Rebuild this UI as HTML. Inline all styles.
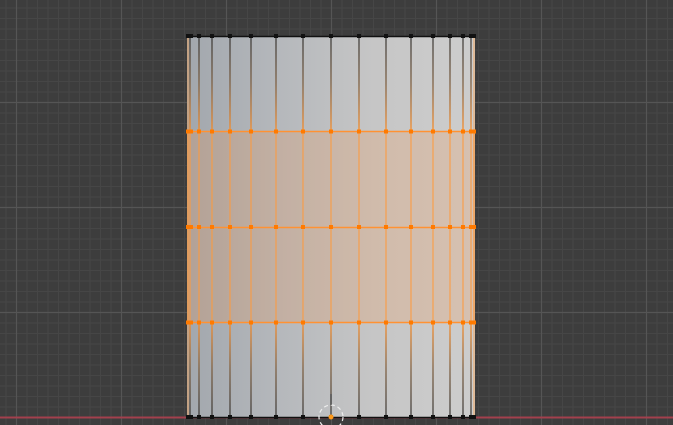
<!DOCTYPE html>
<html><head><style>html,body{margin:0;padding:0;background:#3d3d3d;overflow:hidden}svg{display:block}</style></head><body>
<svg width="673" height="425" viewBox="0 0 673 425" xmlns="http://www.w3.org/2000/svg">
<defs>
<pattern id="minor" width="10.5" height="10.5" patternUnits="userSpaceOnUse" x="5.5" y="7.5">
<path d="M0 0.5H10.5M0.5 0V10.5" stroke="#464646" stroke-width="1" fill="none"/>
</pattern>
<linearGradient id="body" x1="187" x2="475" y1="0" y2="0" gradientUnits="userSpaceOnUse">
<stop offset="0" stop-color="#a2a7ad"/><stop offset="0.3" stop-color="#b4b7bb"/><stop offset="0.65" stop-color="#c6c6c6"/><stop offset="1" stop-color="#cdcdcd"/>
</linearGradient>
<linearGradient id="topl" x1="0" y1="36" x2="0" y2="131" gradientUnits="userSpaceOnUse">
<stop offset="0" stop-color="#333"/><stop offset="0.5" stop-color="#7a5a3a"/><stop offset="1" stop-color="#ff8a1e"/></linearGradient>
<linearGradient id="botl" x1="0" y1="322" x2="0" y2="417" gradientUnits="userSpaceOnUse">
<stop offset="0" stop-color="#ff8a1e"/><stop offset="0.5" stop-color="#7a5a3a"/><stop offset="1" stop-color="#333"/></linearGradient>
<g id="dots">
<rect x="186" y="-2" width="4" height="4"/><rect x="189" y="-2" width="4" height="4"/><rect x="197" y="-2" width="4" height="4"/><rect x="210" y="-2" width="4" height="4"/><rect x="228" y="-2" width="4" height="4"/><rect x="249" y="-2" width="4" height="4"/><rect x="274" y="-2" width="4" height="4"/><rect x="301" y="-2" width="4" height="4"/><rect x="329" y="-2" width="4" height="4"/><rect x="357" y="-2" width="4" height="4"/><rect x="384" y="-2" width="4" height="4"/><rect x="409" y="-2" width="4" height="4"/><rect x="431" y="-2" width="4" height="4"/><rect x="448" y="-2" width="4" height="4"/><rect x="461" y="-2" width="4" height="4"/><rect x="469" y="-2" width="4" height="4"/><rect x="472" y="-2" width="4" height="4"/>
</g>
</defs>
<rect width="673" height="425" fill="#3d3d3d"/>
<rect width="673" height="425" fill="url(#minor)"/>
<g stroke="#555" stroke-width="1.2">
<path d="M16.5 0V425M121.5 0V425M226.5 0V425M331.5 0V425M436.5 0V425M541.5 0V425M646.5 0V425"/>
<path d="M0 102.5H673M0 207.5H673M0 312.5H673"/>
</g>
<line x1="0" y1="417.5" x2="673" y2="417.5" stroke="#a3404d" stroke-width="2"/>
<rect x="187" y="36" width="288" height="381" fill="url(#body)"/>
<rect x="187" y="131" width="288" height="191" fill="#ff8c30" opacity="0.18"/>
<g stroke-width="1.2">
<path stroke="url(#topl)" d="M190 36V131M199 36V131M212 36V131M230 36V131M251 36V131M276 36V131M303 36V131M331 36V131M359 36V131M386 36V131M411 36V131M433 36V131M450 36V131M463 36V131M471 36V131"/>
<path stroke="#ff9a3c" opacity="0.85" d="M188 131V322M190 131V322M199 131V322M212 131V322M230 131V322M251 131V322M276 131V322M303 131V322M331 131V322M359 131V322M386 131V322M411 131V322M433 131V322M450 131V322M463 131V322M471 131V322M474 131V322"/>
<path stroke="url(#botl)" d="M190 322V417M199 322V417M212 322V417M230 322V417M251 322V417M276 322V417M303 322V417M331 322V417M359 322V417M386 322V417M411 322V417M433 322V417M450 322V417M463 322V417M471 322V417"/>
<path stroke="#ff9a3c" opacity="0.6" d="M188 36V417M474 36V417"/>
</g>
<path d="M187 131.5H475M187 227.5H475M187 322.5H475" stroke="#ff9233" stroke-width="1.5"/>
<path d="M187 36.5H475M187 417.5H475" stroke="#111" stroke-width="1.5"/>
<g fill="#ff7a00">
<use href="#dots" y="131.5"/><use href="#dots" y="227"/><use href="#dots" y="322.5"/>
</g>
<g fill="#111"><use href="#dots" y="36"/><use href="#dots" y="417"/></g>
<circle cx="331" cy="417" r="12" fill="none" stroke="#eee" stroke-width="1.2" stroke-dasharray="4 3"/>
<path d="M331 405V394" stroke="#222" stroke-width="1"/>
<circle cx="331" cy="417" r="2.5" fill="#ff9a1a"/>
</svg>
</body></html>
